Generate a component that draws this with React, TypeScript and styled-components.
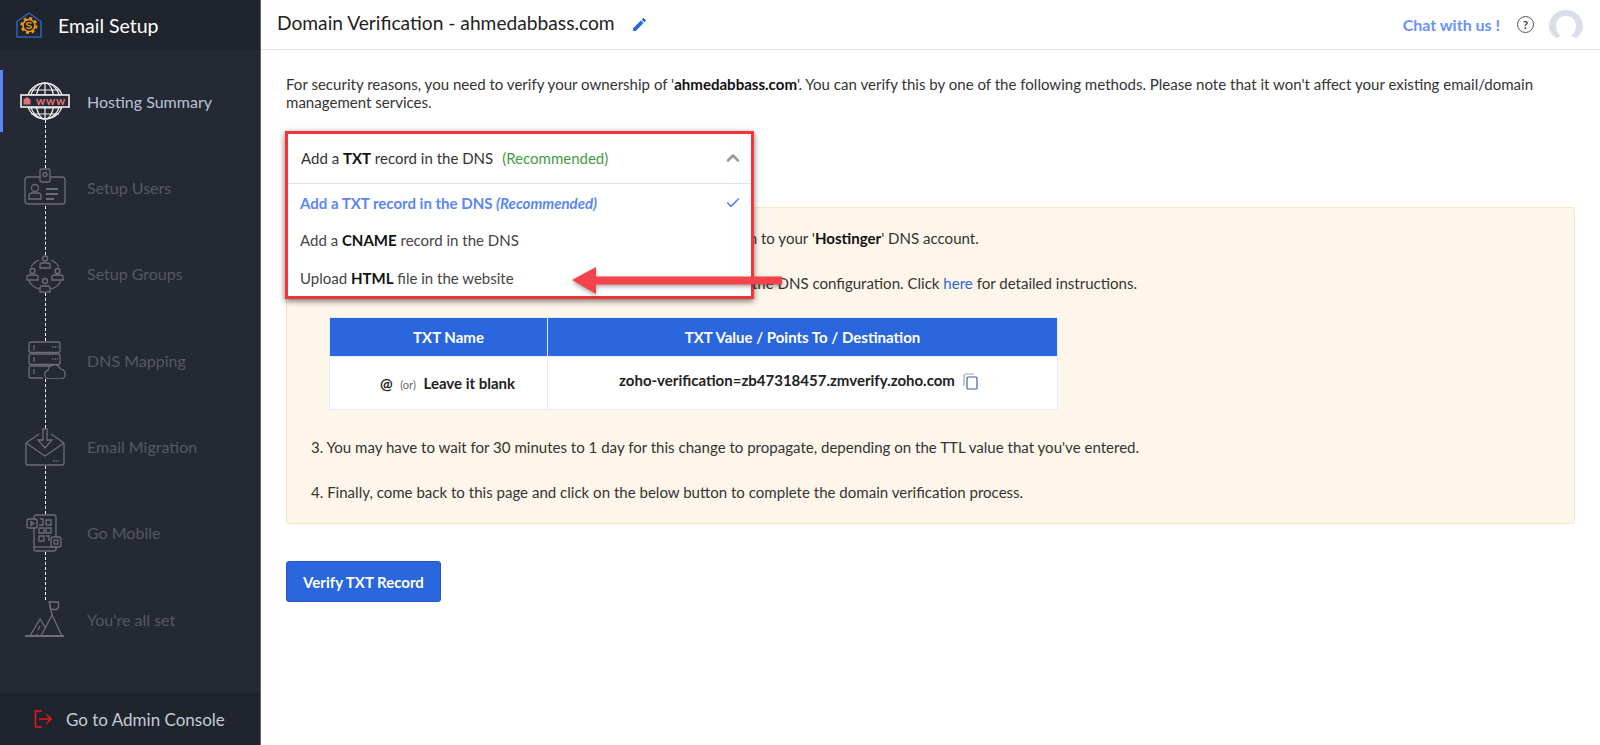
import { Check, ChevronUp } from 'lucide-react';
import { MdEdit } from 'react-icons/md';
import styled, { createGlobalStyle } from 'styled-components';

const GlobalStyle = createGlobalStyle`
  html, body {
    margin: 0;
    height: 745px;
    overflow: hidden;
    background: #fff;
    font-family: Lato, 'Liberation Sans', sans-serif;
    color: #333;
  }
`;

const Page = styled.div`
  display: flex;
  height: 745px;
`;

const Sidebar = styled.aside`
  position: relative;
  display: flex;
  flex-direction: column;
  flex: 0 0 260px;
  box-sizing: content-box;
  width: 260px;
  background: #252934;
  border-right: 1px solid #62656b;
`;

const Brand = styled.div`
  display: flex;
  align-items: center;
  gap: 15px;
  height: 50px;
  padding-left: 15px;
  background: #20242c;
  color: #fff;
  font-size: 19.5px;
`;

const Steps = styled.nav`
  flex: 1;
  padding: 32px 0 0 22px;
`;

const StepRow = styled.div`
  display: flex;
  align-items: center;
  height: 38px;
`;

const StepLabel = styled.span<{ $active?: boolean }>`
  margin-left: 19px;
  font-size: 16px;
  color: ${(p) => (p.$active ? '#b8c4d6' : '#555963')};
`;

const Connector = styled.div`
  height: 48.4px;
  margin-left: 23px;
  border-left: 1px dashed #fff;
`;

const ActiveBar = styled.div`
  position: absolute;
  left: 0;
  top: 70px;
  width: 3px;
  height: 62px;
  background: #5b86f5;
`;

const AdminLink = styled.div`
  display: flex;
  align-items: center;
  gap: 14px;
  height: 52px;
  padding-left: 34px;
  box-sizing: border-box;
  background: #20242c;
  color: #c3ccda;
  font-size: 17px;
`;

const Main = styled.main`
  flex: 1;
  min-width: 0;
`;

const TopBar = styled.header`
  display: flex;
  align-items: center;
  height: 49px;
  padding: 0 17px 0 16px;
  border-bottom: 1px solid #e6e6e6;
`;

const Title = styled.h1`
  margin: 0 0 4px;
  font-size: 19.2px;
  font-weight: 400;
  color: #222;
`;

const EditIcon = styled(MdEdit)`
  margin: 0 0 1px 16px;
  color: #2a66dd;
`;

const TopActions = styled.div`
  display: flex;
  align-items: center;
  margin-left: auto;
`;

const Chat = styled.a`
  font-size: 16px;
  font-weight: 700;
  color: #6b92f6;
`;

const HelpIcon = styled.span`
  display: flex;
  align-items: center;
  justify-content: center;
  width: 15px;
  height: 15px;
  margin: 0 15px 0 17px;
  border: 1px solid #555;
  border-radius: 50%;
  font-size: 11px;
  font-weight: 700;
  color: #333;
`;

const Content = styled.div`
  padding: 25px 25px 0;
`;

const Intro = styled.p`
  margin: 0;
  font-size: 15.05px;
  line-height: 18px;
  color: #333;

  b {
    color: #111;
  }
`;

const SelectHolder = styled.div`
  position: relative;
  height: 76px;
  margin-top: 20px;
`;

const Dropdown = styled.div`
  position: absolute;
  left: -1px;
  top: 0;
  z-index: 2;
  box-sizing: border-box;
  width: 469px;
  height: 168px;
  background: #fff;
  border: 3px solid #f4333b;
  box-shadow: 0 2px 6px rgba(0, 0, 0, 0.55);
  font-size: 15px;
`;

const SelectHead = styled.div`
  display: flex;
  align-items: center;
  box-sizing: content-box;
  height: 47px;
  padding: 0 8px 2px 13px;
  border-bottom: 1px solid #e3e3e3;
  color: #333;

  b {
    color: #111;
  }
`;

const Recommended = styled.span`
  margin-left: 9px;
  color: #3f9d3f;
`;

const HeadChevron = styled(ChevronUp)`
  margin-left: auto;
  color: #999;
`;

const Option = styled.div<{ $selected?: boolean }>`
  display: flex;
  align-items: center;
  justify-content: space-between;
  height: 37.5px;
  padding: 0 10px 0 12px;
  color: ${(p) => (p.$selected ? '#5b86f5' : '#444')};
  font-weight: ${(p) => (p.$selected ? 700 : 400)};

  b {
    color: #111;
  }

  i {
    font-weight: 700;
  }
`;

const PointerArrow = styled.svg`
  position: absolute;
  left: 286px;
  top: 135px;
  z-index: 3;
  filter: drop-shadow(0 2px 2px rgba(0, 0, 0, 0.35));
`;

const Notice = styled.section`
  box-sizing: border-box;
  height: 317px;
  padding: 21px 24px 0;
  background: #fef6ea;
  border: 1px solid #fde5bd;
  border-radius: 3px;
  font-size: 15.05px;
  color: #333;
`;

const NoticeLine = styled.p<{ $gap: number }>`
  margin: ${(p) => p.$gap}px 0 0;
  line-height: 18px;

  b {
    color: #111;
  }

  a {
    color: #2a66dd;
  }
`;

const RecordTable = styled.table`
  width: 728px;
  margin: 25px 0 0 18px;
  border-collapse: collapse;
  table-layout: fixed;
  background: #fff;
  font-size: 15px;
`;

const HeadCell = styled.th<{ $w: number; $shift?: number }>`
  box-sizing: border-box;
  width: ${(p) => p.$w}px;
  height: 39px;
  padding: 0 0 0 ${(p) => p.$shift ?? 0}px;
  background: #2a66dd;
  border: 1px solid #e6ebf3;
  color: #fff;
  font-weight: 700;
  font-size: 15px;
`;

const BodyCell = styled.td<{ $left?: number; $right?: number; $bottom?: number }>`
  box-sizing: border-box;
  height: 53px;
  padding: 0 ${(p) => p.$right ?? 0}px ${(p) => p.$bottom ?? 0}px ${(p) => p.$left ?? 0}px;
  border: 1px solid #e6ebf3;
  text-align: center;
  font-weight: 700;
  color: #222;

  small {
    margin: 0 4px;
    font-size: 11px;
    font-weight: 400;
    color: #666;
  }
`;

const CopyIcon = styled.svg`
  margin-left: 8px;
  vertical-align: -4px;
`;

const VerifyButton = styled.button`
  display: block;
  width: 155px;
  height: 41px;
  margin-top: 37px;
  padding: 0;
  background: #2a66dd;
  border: 1px solid #2558c4;
  border-radius: 3px;
  color: #fff;
  font-family: inherit;
  font-size: 15px;
  font-weight: 700;
`;

const GlobeSvg = styled.svg`
  margin: 0 -2px;
  flex: none;
`;

const LogoIcon = () => (
  <svg width="28" height="28" viewBox="0 0 28 28" fill="none">
    <path d="M2 10.5 14 2l12 8.5V26H2Z" stroke="#2a66b8" strokeWidth="1.5" strokeLinejoin="round" />
    <circle cx="14" cy="14.500" r="7.500" stroke="#f39c12" strokeWidth="2" strokeDasharray="3 2.900" />
    <circle cx="14" cy="14.500" r="6" fill="#20242c" stroke="#f39c12" strokeWidth="1.600" />
    <path d="M16.500 12.500c-1-1.400-5-1.200-5 .5 0 2.100 5 1 5 3 0 1.700-4 1.700-5 .3" stroke="#f39c12" strokeWidth="1.300" />
  </svg>
);

const GlobeIcon = () => (
  <GlobeSvg width="50" height="38" viewBox="-2 0 50 38" fill="none" stroke="#f2f2f2" strokeWidth="1.2">
    <circle cx="23" cy="19" r="18" />
    <ellipse cx="23" cy="19" rx="9" ry="18" />
    <ellipse cx="23" cy="19" rx="15" ry="18" />
    <path d="M23 1v36M8 8h30M6 13h34M6 26h34M9 32h28" />
    <rect x="-1" y="13" width="48" height="12" fill="#252934" stroke="#f2f2f2" strokeWidth="1.6" />
    <path d="M1.500 22.500v-5l3.500-2.500 3.500 2.500v5Z" fill="#e0727a" stroke="none" />
    <text x="14" y="22.500" fill="#e0727a" stroke="none" fontSize="11.5" fontWeight="700" letterSpacing="0.8">www</text>
  </GlobeSvg>
);

const grey = { fill: 'none', stroke: '#6b6e74', strokeWidth: 1.3 };

const UserCardIcon = () => (
  <svg width="46" height="38" viewBox="0 0 46 38" {...grey}>
    <path d="M18 9H6a3 3 0 0 0-3 3v21a3 3 0 0 0 3 3h34a3 3 0 0 0 3-3V12a3 3 0 0 0-3-3H28" />
    <rect x="18" y="1" width="10" height="13" rx="1.5" />
    <circle cx="23" cy="6.5" r="2" />
    <circle cx="13" cy="20" r="3.500" />
    <path d="M7 31v-3a3 3 0 0 1 3-3h6a3 3 0 0 1 3 3v3Z" />
    <path d="M24 21h12M24 26h12M24 31h8" strokeWidth="1.8" />
  </svg>
);

const GroupsIcon = () => (
  <svg width="46" height="38" viewBox="0 0 46 38" {...grey}>
    <circle cx="23" cy="3.500" r="2.500" />
    <path d="M18 13v-3a2 2 0 0 1 2-2h6a2 2 0 0 1 2 2v3Z" />
    <circle cx="10.500" cy="16" r="2.500" />
    <path d="M5 25v-3a2 2 0 0 1 2-2h7a2 2 0 0 1 2 2v3Z" />
    <circle cx="35.500" cy="16" r="2.500" />
    <path d="M30 25v-3a2 2 0 0 1 2-2h7a2 2 0 0 1 2 2v3Z" />
    <circle cx="23" cy="26" r="2.500" />
    <path d="M18 37v-4a2 2 0 0 1 2-2h6a2 2 0 0 1 2 2v4Z" />
    <path d="M9 12q3-5 8-7M37 12q-3-5-8-7M7 26q3 6 10 8M39 26q-3 6-10 8" />
  </svg>
);

const ServerIcon = () => (
  <svg width="46" height="38" viewBox="0 0 46 38" {...grey}>
    <rect x="7" y="1" width="31" height="10.5" rx="2" />
    <rect x="7" y="13" width="31" height="10.5" rx="2" />
    <path d="M7 27a2 2 0 0 1 2-2h20M7 27v8a2 2 0 0 0 2 2h12" />
    <path d="M12 4v5M12 16v5M12 28v5" />
    <path d="M30 6h6M30 18h6" strokeDasharray="1.5 1" strokeWidth="1.6" />
    <path d="M27 38a4.500 4.500 0 0 1-1-8.800 6.500 6.500 0 0 1 12.500-1 5 5 0 0 1 1 9.800Z" fill="#252934" />
  </svg>
);

const InboxIcon = () => (
  <svg width="46" height="38" viewBox="0 0 46 38" {...grey}>
    <path d="M4 15v20a2 2 0 0 0 2 2h34a2 2 0 0 0 2-2V15" />
    <path d="M4 15 17 6M42 15 29 6M4 15l19 13 19-13" />
    <path d="M21 1h4v11h5l-7 8-7-8h5Z" fill="#252934" />
    <path d="M31 33h6" strokeDasharray="1.5 1" strokeWidth="1.6" />
  </svg>
);

const MobileIcon = () => (
  <svg width="46" height="38" viewBox="0 0 46 38" {...grey}>
    <rect x="12" y="1" width="22" height="36" rx="2" />
    <path d="M12 33h22" />
    <rect x="5" y="5" width="10" height="9" rx="2" fill="#252934" />
    <path d="m9 7.500 3 2-3 2Z" />
    <path d="M18 5h3v6h-4M24 6h5v5h-5ZM17 14h5v5h-5ZM24 14h5v5h-5ZM17 22h5v5h-5ZM24 22h3v5" />
    <rect x="29" y="23" width="10" height="10" rx="2" fill="#252934" />
    <rect x="32" y="26" width="4" height="4" />
  </svg>
);

const SummitIcon = () => (
  <svg width="46" height="38" viewBox="0 0 46 38" {...grey}>
    <path d="M3 36h39" strokeWidth="1.8" />
    <path d="M8 36 18 19l5 8M19 36 30 15l10 21" />
    <path d="M27 1l3 14" />
    <path d="M27.500 2h9v5.500l-2 2h-6Z" />
    <path d="M15 35v-1M18 26l-2 4" />
  </svg>
);

const LogoutIcon = () => (
  <svg width="18" height="18" viewBox="0 0 18 18" fill="none" stroke="#e0181f" strokeWidth="1.6">
    <path d="M8 1H1.500v16H8M5 9h12M12.500 4.500 17 9l-4.500 4.500" />
  </svg>
);

const AvatarIcon = () => (
  <svg width="34" height="30" viewBox="0 0 34 30">
    <path
      d="M7 28C2 24 0 20 0 17 0 7 7.500 0 17 0s17 7 17 17c0 3-2 7-7 11l-5-2c3-2 5-6 5-10 0-6-4-10-10-10S7 10 7 16c0 4 2 8 5 10Z"
      fill="#d9dee8"
    />
  </svg>
);

const CopyGlyph = () => (
  <CopyIcon width="16" height="17" viewBox="0 0 16 17" fill="none" strokeWidth="1.2">
    <path d="M1 13V3a2 2 0 0 1 2-2h8" stroke="#9aa3b5" />
    <rect x="4" y="4" width="10" height="12" rx="1" stroke="#3d5fa8" />
  </CopyIcon>
);

const steps = [
  { label: 'Hosting Summary', icon: <GlobeIcon />, active: true },
  { label: 'Setup Users', icon: <UserCardIcon /> },
  { label: 'Setup Groups', icon: <GroupsIcon /> },
  { label: 'DNS Mapping', icon: <ServerIcon /> },
  { label: 'Email Migration', icon: <InboxIcon /> },
  { label: 'Go Mobile', icon: <MobileIcon /> },
  { label: "You're all set", icon: <SummitIcon /> },
];

export default function App() {
  return (
    <Page>
      <GlobalStyle />
      <Sidebar>
        <Brand>
          <LogoIcon />
          Email Setup
        </Brand>
        <ActiveBar />
        <Steps>
          {steps.map((step, i) => (
            <div key={step.label}>
              <StepRow>
                {step.icon}
                <StepLabel $active={step.active}>{step.label}</StepLabel>
              </StepRow>
              {i < steps.length - 1 && <Connector />}
            </div>
          ))}
        </Steps>
        <AdminLink>
          <LogoutIcon />
          Go to Admin Console
        </AdminLink>
      </Sidebar>
      <Main>
        <TopBar>
          <Title>Domain Verification - ahmedabbass.com</Title>
          <EditIcon size={17} />
          <TopActions>
            <Chat>Chat with us !</Chat>
            <HelpIcon>?</HelpIcon>
            <AvatarIcon />
          </TopActions>
        </TopBar>
        <Content>
          <Intro>
            For security reasons, you need to verify your ownership of '<b>ahmedabbass.com</b>'. You can verify this by
            one of the following methods. Please note that it won't affect your existing email/domain management services.
          </Intro>
          <SelectHolder>
            <Dropdown>
              <SelectHead>
                <span>
                  Add a <b>TXT</b> record in the DNS
                </span>
                <Recommended>(Recommended)</Recommended>
                <HeadChevron size={20} strokeWidth={3} />
              </SelectHead>
              <Option $selected>
                <span>
                  Add a TXT record in the DNS <i>(Recommended)</i>
                </span>
                <Check size={16} strokeWidth={2.5} />
              </Option>
              <Option>
                <span>
                  Add a <b>CNAME</b> record in the DNS
                </span>
              </Option>
              <Option>
                <span>
                  Upload <b>HTML</b> file in the website
                </span>
              </Option>
            </Dropdown>
            <PointerArrow width="212" height="30" viewBox="0 0 212 30">
              <path d="M0 14 24 1v9.500h186v8H24V28Z" fill="#f4434a" />
            </PointerArrow>
          </SelectHolder>
          <Notice>
            <NoticeLine $gap={0}>
              1. To add this TXT record for your domain check, you need to sign in to your '<b>Hostinger</b>' DNS account.
            </NoticeLine>
            <NoticeLine $gap={27}>
              2. Add a TXT record with the following value for this domain under the DNS configuration. Click <a>here</a> for detailed instructions.
            </NoticeLine>
            <RecordTable>
              <thead>
                <tr>
                  <HeadCell $w={218} $shift={20}>TXT Name</HeadCell>
                  <HeadCell $w={510}>TXT Value / Points To / Destination</HeadCell>
                </tr>
              </thead>
              <tbody>
                <tr>
                  <BodyCell $left={18} $bottom={1}>
                    @ <small>(or)</small> Leave it blank
                  </BodyCell>
                  <BodyCell $right={7} $bottom={5}>
                    zoho-verification=zb47318457.zmverify.zoho.com
                    <CopyGlyph />
                  </BodyCell>
                </tr>
              </tbody>
            </RecordTable>
            <NoticeLine $gap={28}>
              3. You may have to wait for 30 minutes to 1 day for this change to propagate, depending on the TTL value that you've entered.
            </NoticeLine>
            <NoticeLine $gap={27}>
              4. Finally, come back to this page and click on the below button to complete the domain verification process.
            </NoticeLine>
          </Notice>
          <VerifyButton>Verify TXT Record</VerifyButton>
        </Content>
      </Main>
    </Page>
  );
}
